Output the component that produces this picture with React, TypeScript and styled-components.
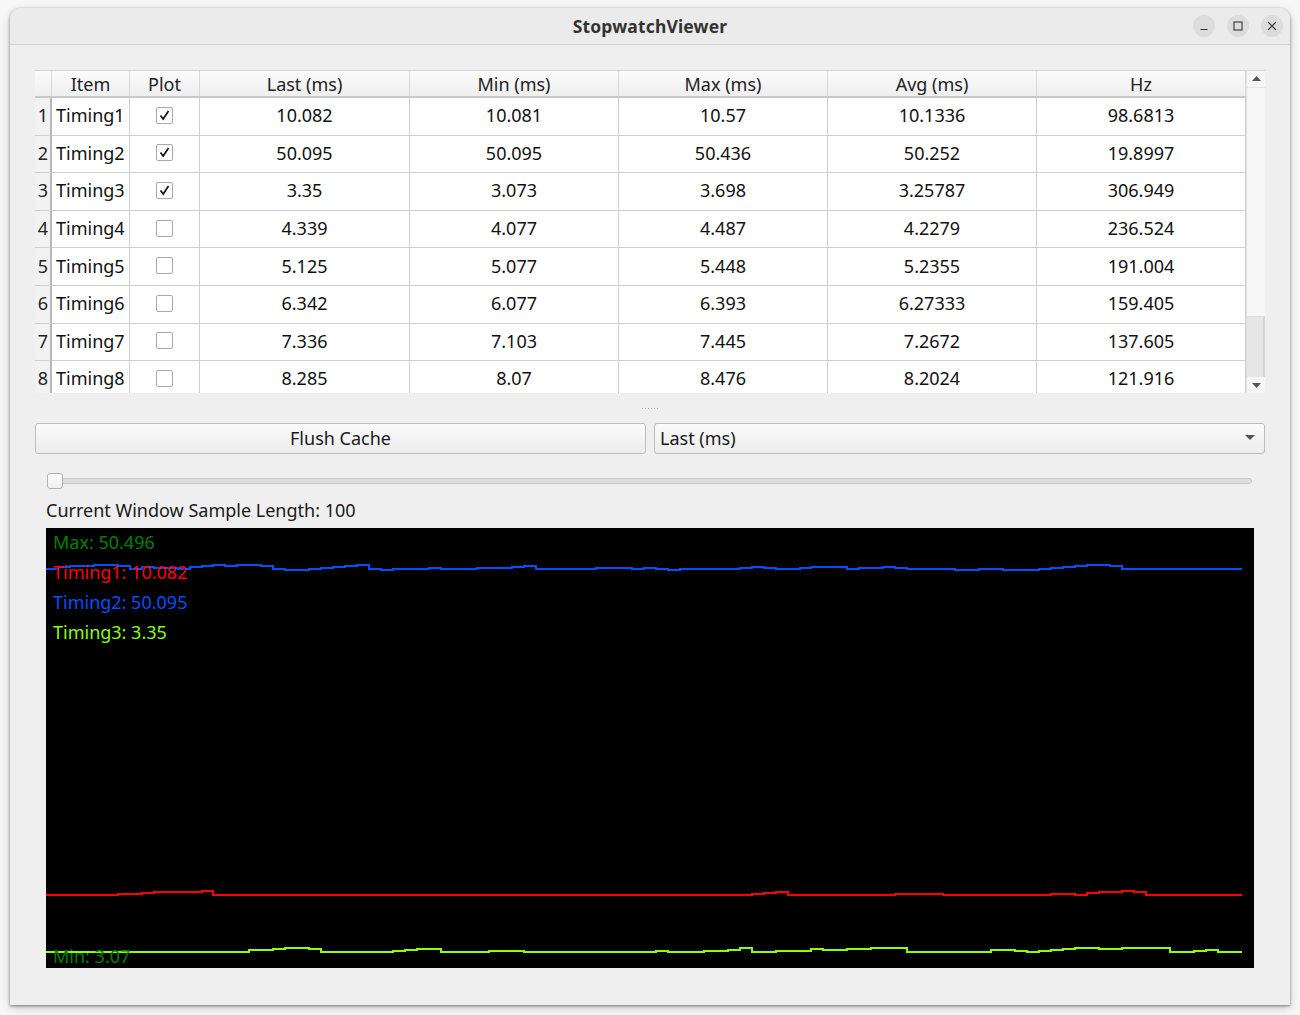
import React from 'react';
import styled, {createGlobalStyle} from 'styled-components';

const GlobalStyle = createGlobalStyle`
  html, body {
    margin: 0;
    padding: 0;
    background: #f7f7f7;
  }
  body {
    font-family: "Noto Sans", "Open Sans", sans-serif;
    color: #1c1c1c;
  }
`;

const Screen = styled.div`
  width: 1300px;
  height: 1015px;
  padding: 8px 10px 0 10px;
  box-sizing: border-box;
`;

const Window = styled.div`
  width: 1280px;
  height: 997px;
  border-radius: 11px 11px 0 0;
  background: #efefef;
  box-shadow: 0 1px 3px rgba(0, 0, 0, 0.45), 0 3px 10px rgba(0, 0, 0, 0.18);
  overflow: hidden;
  display: flex;
  flex-direction: column;
`;

const TitleBar = styled.div`
  height: 36px;
  flex: none;
  background: #ebebeb;
  border-bottom: 1px solid #d4d4d4;
  display: flex;
  align-items: center;
  justify-content: center;
  position: relative;
`;

const Title = styled.div`
  font-weight: bold;
  font-size: 17.5px;
  color: #333;
  letter-spacing: 0.15px;
`;

const WinButtons = styled.div`
  position: absolute;
  right: 7px;
  top: 7px;
  display: flex;
  gap: 12px;
`;

const WinButton = styled.div`
  width: 22px;
  height: 22px;
  border-radius: 50%;
  background: #dcdcdc;
  display: flex;
  align-items: center;
  justify-content: center;
`;

const Content = styled.div`
  flex: 1;
  padding: 25px 25px 0 25px;
  display: flex;
  flex-direction: column;
`;

const TableFrame = styled.div`
  height: 323px;
  display: flex;
  background: #fff;
  border-top: 1px solid #d2d2d2;
  box-sizing: border-box;
  font-size: 18px;
`;

const Grid = styled.div`
  flex: 1;
  overflow: hidden;
  display: flex;
  flex-direction: column;
`;

const cols = '17px 78px 70px 210px 209px 209px 209px 209px';

const HeaderRow = styled.div`
  display: grid;
  grid-template-columns: ${cols};
  height: 25px;
  flex: none;
  background: linear-gradient(#fbfbfb, #efefef);
  border-bottom: 2px solid #c9c9c9;
`;

const HeaderCell = styled.div`
  display: flex;
  align-items: center;
  justify-content: center;
  border-right: 1px solid #d8d8d8;
  color: #222;
  line-height: 1;
  padding-top: 1px;
`;

const BodyRow = styled.div`
  display: grid;
  grid-template-columns: ${cols};
  height: 37.6px;
  flex: none;
  box-sizing: border-box;
`;

const RowNumber = styled.div`
  background: #f2f2f2;
  border-right: 2px solid #b9b9b9;
  border-bottom: 1px solid #d0d0d0;
  display: flex;
  align-items: center;
  justify-content: flex-end;
  padding: 0 2px 2px 0;
  color: #222;
`;

const Cell = styled.div<{$align?: 'left' | 'center'}>`
  display: flex;
  align-items: center;
  justify-content: ${({$align}) => ($align === 'left' ? 'flex-start' : 'center')};
  padding-left: ${({$align}) => ($align === 'left' ? '4px' : '0')};
  padding-bottom: 2px;
  border-right: 1px solid #cfcfcf;
  border-bottom: 1px solid #cfcfcf;
  color: #111;
`;

const CheckBox = styled.div`
  width: 15px;
  height: 15px;
  border: 1px solid #a9a9a9;
  border-radius: 2px;
  background: #fff;
  display: flex;
  align-items: center;
  justify-content: center;
`;

const ScrollBar = styled.div`
  width: 18px;
  flex: none;
  background: #f6f6f6;
  border-left: 1px solid #e2e2e2;
  display: flex;
  flex-direction: column;
`;

const ScrollArrow = styled.div`
  height: 16px;
  display: flex;
  align-items: center;
  justify-content: center;
  flex: none;
`;

const ScrollTrack = styled.div`
  flex: 1;
  display: flex;
  flex-direction: column;
  justify-content: flex-end;
  border-top: 1px solid #e4e4e4;
`;

const ScrollHandle = styled.div`
  height: 60px;
  background: #e6e6e6;
  border-right: 2px solid #d4d4d4;
  border-top: 1px solid #dcdcdc;
`;

const Splitter = styled.div`
  height: 30px;
  display: flex;
  align-items: center;
  justify-content: center;
  gap: 2px;
`;

const Dot = styled.span`
  width: 1px;
  height: 1px;
  background: #b3b3b3;
`;

const Controls = styled.div`
  display: grid;
  grid-template-columns: 1fr 1fr;
  gap: 8px;
  height: 31px;
`;

const PushButton = styled.div`
  border: 1px solid #bdbdbd;
  border-radius: 3px;
  background: linear-gradient(#fbfbfb, #ececec);
  display: flex;
  align-items: center;
  justify-content: center;
  font-size: 18px;
  color: #1a1a1a;
  padding-bottom: 1px;
  box-sizing: border-box;
`;

const Combo = styled(PushButton)`
  justify-content: space-between;
  padding: 0 9px 1px 5px;
`;

const Group = styled.div`
  margin: 0 11px;
  display: flex;
  flex-direction: column;
`;

const Slider = styled.div`
  margin-top: 18px;
  height: 18px;
  display: flex;
  align-items: center;
  position: relative;
`;

const Groove = styled.div`
  flex: 1;
  height: 4px;
  margin-left: 1px;
  margin-right: 2px;
  background: #dedede;
  border: 1px solid #cacaca;
  border-radius: 3px;
`;

const Handle = styled.div`
  position: absolute;
  left: 1px;
  top: 1px;
  width: 14px;
  height: 14px;
  border: 1px solid #b2b2b2;
  border-radius: 3px;
  background: linear-gradient(#ffffff, #eeeeee);
`;

const LengthLabel = styled.div`
  margin-top: 10px;
  height: 20px;
  line-height: 20px;
  font-size: 18px;
  color: #1a1a1a;
`;

const Plot = styled.svg`
  margin-top: 8px;
  display: block;
  background: #000;
`;

const rows = [
  ['Timing1', true, '10.082', '10.081', '10.57', '10.1336', '98.6813'],
  ['Timing2', true, '50.095', '50.095', '50.436', '50.252', '19.8997'],
  ['Timing3', true, '3.35', '3.073', '3.698', '3.25787', '306.949'],
  ['Timing4', false, '4.339', '4.077', '4.487', '4.2279', '236.524'],
  ['Timing5', false, '5.125', '5.077', '5.448', '5.2355', '191.004'],
  ['Timing6', false, '6.342', '6.077', '6.393', '6.27333', '159.405'],
  ['Timing7', false, '7.336', '7.103', '7.445', '7.2672', '137.605'],
  ['Timing8', false, '8.285', '8.07', '8.476', '8.2024', '121.916'],
] as const;

const headers = ['Item', 'Plot', 'Last (ms)', 'Min (ms)', 'Max (ms)', 'Avg (ms)', 'Hz'];

function rng(seed: number) {
  let s = seed;
  return () => {
    s = (s * 1103515245 + 12345) & 0x7fffffff;
    return s / 0x7fffffff;
  };
}

// pixel offsets above the base line: flat stretches broken by small bump clusters
function makeSeries(seed: number, maxUp: number, bumpChance: number, floor: number) {
  const r = rng(seed);
  const out: number[] = [];
  let left = 0;
  let level = 0;
  for (let i = 0; i < 100; i++) {
    if (left <= 0 && r() < bumpChance) left = 3 + Math.floor(r() * 6);
    if (left > 0) {
      level = Math.min(maxUp, Math.max(floor, level + Math.round((r() - 0.4) * 3)));
      left--;
    } else {
      level = 0;
    }
    out.push(level);
  }
  return out;
}

const PLOT_W = 1208;
const PLOT_H = 440;
const STEP = 11.96;

function stepPath(base: number, offs: number[]) {
  let d = `M0 ${base - offs[0]}`;
  offs.forEach((o, i) => {
    const y = base - o;
    d += ` L${(i * STEP).toFixed(1)} ${y} L${((i + 1) * STEP).toFixed(1)} ${y}`;
  });
  return d;
}

const blue = makeSeries(7, 4, 0.3, -1);
const red = makeSeries(21, 4, 0.12, 0);
const green = makeSeries(5, 4, 0.2, 0);

const Check = () => (
  <svg width="11" height="11" viewBox="0 0 11 11">
    <path d="M1.5 5.5 L4.2 9 L9.5 1" stroke="#111" strokeWidth="1.7" fill="none" />
  </svg>
);

export default function App() {
  return (
    <Screen>
      <GlobalStyle />
      <Window>
        <TitleBar>
          <Title>StopwatchViewer</Title>
          <WinButtons>
            <WinButton>
              <svg width="10" height="10" viewBox="0 0 10 10">
                <path d="M1.5 8.5 H8.5" stroke="#333" strokeWidth="1.1" />
              </svg>
            </WinButton>
            <WinButton>
              <svg width="10" height="10" viewBox="0 0 10 10">
                <rect x="1" y="1" width="8" height="8" stroke="#333" strokeWidth="1.1" fill="none" />
              </svg>
            </WinButton>
            <WinButton>
              <svg width="10" height="10" viewBox="0 0 10 10">
                <path d="M1 1 L9 9 M9 1 L1 9" stroke="#333" strokeWidth="1.1" />
              </svg>
            </WinButton>
          </WinButtons>
        </TitleBar>
        <Content>
          <TableFrame>
            <Grid>
              <HeaderRow>
                <HeaderCell />
                {headers.map((h) => (
                  <HeaderCell key={h}>{h}</HeaderCell>
                ))}
              </HeaderRow>
              {rows.map(([name, plotted, ...vals], i) => (
                <BodyRow key={name}>
                  <RowNumber>{i + 1}</RowNumber>
                  <Cell $align="left">{name}</Cell>
                  <Cell>
                    <CheckBox>{plotted && <Check />}</CheckBox>
                  </Cell>
                  {vals.map((v, j) => (
                    <Cell key={j}>{v}</Cell>
                  ))}
                </BodyRow>
              ))}
            </Grid>
            <ScrollBar>
              <ScrollArrow>
                <svg width="9" height="6" viewBox="0 0 9 6">
                  <path d="M0 5 L4.5 0 L9 5 Z" fill="#555" />
                </svg>
              </ScrollArrow>
              <ScrollTrack>
                <ScrollHandle />
                <ScrollArrow>
                  <svg width="9" height="6" viewBox="0 0 9 6">
                    <path d="M0 1 L4.5 6 L9 1 Z" fill="#555" />
                  </svg>
                </ScrollArrow>
              </ScrollTrack>
            </ScrollBar>
          </TableFrame>
          <Splitter>
            {[0, 1, 2, 3, 4, 5].map((k) => (
              <Dot key={k} />
            ))}
          </Splitter>
          <Controls>
            <PushButton>Flush Cache</PushButton>
            <Combo>
              <span>Last (ms)</span>
              <svg width="10" height="6" viewBox="0 0 10 6">
                <path d="M0 0 L5 5 L10 0 Z" fill="#555" />
              </svg>
            </Combo>
          </Controls>
          <Group>
            <Slider>
              <Groove />
              <Handle />
            </Slider>
            <LengthLabel>Current Window Sample Length: 100</LengthLabel>
            <Plot width={PLOT_W} height={PLOT_H} viewBox={`0 0 ${PLOT_W} ${PLOT_H}`}>
              <g fill="none" strokeWidth="2" shapeRendering="crispEdges">
                <path d={stepPath(424, green)} stroke="#8cff00" />
                <path d={stepPath(367, red)} stroke="#ff0000" />
                <path d={stepPath(40.5, blue)} stroke="#0050ff" />
              </g>
              <g fontFamily='"Noto Sans", "Open Sans", sans-serif' fontSize="18">
                <text x="7" y="21" fill="#008000">Max: 50.496</text>
                <text x="7" y="51" fill="#ff0000">Timing1: 10.082</text>
                <text x="7" y="81" fill="#0050ff">Timing2: 50.095</text>
                <text x="7" y="111" fill="#8cff00">Timing3: 3.35</text>
                <text x="7" y="435" fill="#008000">Min: 3.07</text>
              </g>
            </Plot>
          </Group>
        </Content>
      </Window>
    </Screen>
  );
}
